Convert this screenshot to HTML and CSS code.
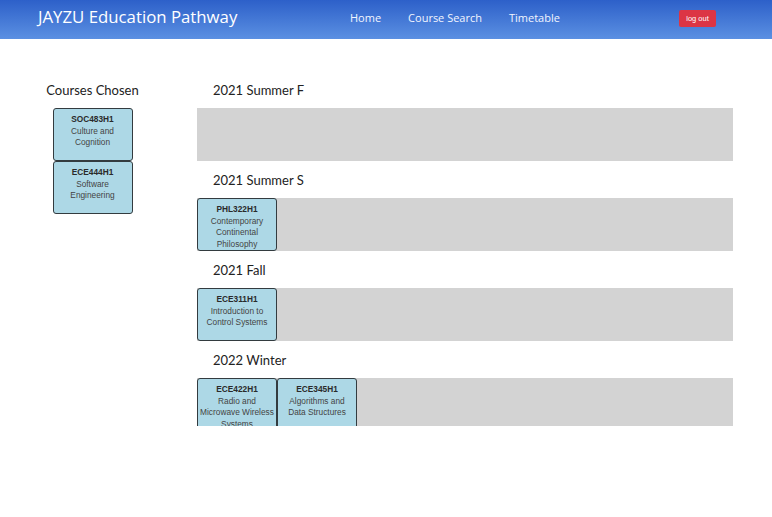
FILE: index.html
```html
<!DOCTYPE html>
<html>
<head>
<meta charset="utf-8">
<link rel="stylesheet" href="styles.css">
</head>
<body>
<header class="topbar">
  <div class="brand">JAYZU Education Pathway</div>
  <nav class="nav">
    <a class="nav-link">Home</a>
    <a class="nav-link">Course Search</a>
    <a class="nav-link">Timetable</a>
  </nav>
  <div></div>
  <button class="logout">log out</button>
</header>
<div class="viewport">
  <main class="main">
    <section class="chosen">
      <h2 class="chosen-title">Courses Chosen</h2>
      <div class="chosen-list">
        <div class="card"><div class="code">SOC483H1</div><div class="name">Culture and Cognition</div></div>
        <div class="card"><div class="code">ECE444H1</div><div class="name">Software Engineering</div></div>
      </div>
    </section>
    <section class="terms">
      <div class="term">
        <h3 class="term-title">2021 Summer F</h3>
        <div class="term-row"></div>
      </div>
      <div class="term">
        <h3 class="term-title">2021 Summer S</h3>
        <div class="term-row">
          <div class="card"><div class="code">PHL322H1</div><div class="name">Contemporary Continental Philosophy</div></div>
        </div>
      </div>
      <div class="term">
        <h3 class="term-title">2021 Fall</h3>
        <div class="term-row">
          <div class="card"><div class="code">ECE311H1</div><div class="name">Introduction to Control Systems</div></div>
        </div>
      </div>
      <div class="term">
        <h3 class="term-title">2022 Winter</h3>
        <div class="term-row">
          <div class="card"><div class="code">ECE422H1</div><div class="name">Radio and Microwave Wireless Systems</div></div>
          <div class="card"><div class="code">ECE345H1</div><div class="name">Algorithms and Data Structures</div></div>
        </div>
      </div>
    </section>
  </main>
</div>
</body>
</html>
```
FILE: styles.css
```css
* { box-sizing: border-box; }
html, body { margin: 0; padding: 0; background: #fff; }
body { font-family: "Open Sans", "Liberation Sans", sans-serif; }

.topbar {
  height: 39px;
  background: linear-gradient(#2d60c9, #5b90e2);
  display: grid;
  grid-template-columns: 312px auto 1fr auto;
  align-items: center;
  padding: 0 56px 0 38px;
  color: #fff;
}
.brand { font-size: 16.8px; line-height: 1; padding-bottom: 4px; }
.nav { display: flex; gap: 27px; font-size: 11px; padding-bottom: 4px; }
.nav-link { color: #f2f5ff; }
.logout {
  background: #dc3545;
  color: #fff;
  border: none;
  border-radius: 2px;
  font-family: "Liberation Sans", sans-serif;
  font-size: 7.5px;
  width: 37px;
  height: 17px;
  padding: 0;
  margin-bottom: 3px;
}

.viewport { height: 387px; overflow: hidden; }
.main {
  display: grid;
  grid-template-columns: 185px 536px;
  column-gap: 12px;
  padding-top: 32px;
}
.chosen { display: flex; flex-direction: column; align-items: center; }
.chosen-title, .term-title {
  margin: 0;
  height: 37px;
  line-height: 39px;
  font-family: Lato, "Open Sans", sans-serif;
  font-weight: 400;
  font-size: 13px;
  color: #222;
}
.chosen-list { display: flex; flex-direction: column; }
.term-title { padding-left: 16px; }
.term-row { background: #d3d3d3; height: 53px; display: flex; }

.card {
  width: 80px;
  height: 53px;
  flex: none;
  background: #add8e6;
  border: 1px solid #333b3f;
  border-radius: 3px;
  text-align: center;
  padding: 5px 2px 0;
  font-family: "Liberation Sans", sans-serif;
  font-size: 8.3px;
  line-height: 11.5px;
  color: #3a3a3a;
}
.code { font-weight: 700; color: #2a2a2a; }
.name { color: #444; }
```
